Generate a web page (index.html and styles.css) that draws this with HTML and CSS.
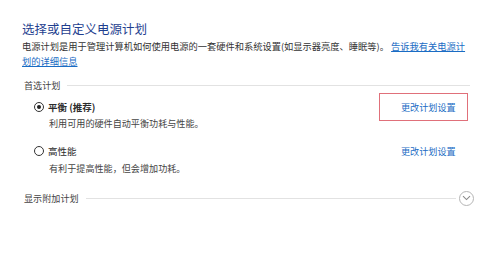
FILE: index.html
```html
<!DOCTYPE html>
<html lang="zh-CN">
<head>
    <meta charset="UTF-8">
    <meta name="viewport" content="width=device-width, initial-scale=1.0">
    <title>电源选项</title>
    <link rel="stylesheet" href="styles.css">
</head>
<body>
    <div class="page">
        <h1 class="title">选择或自定义电源计划</h1>
        <p class="intro">电源计划是用于管理计算机如何使用电源的一套硬件和系统设置(如显示器亮度、睡眠等)。 <a href="#" class="link">告诉我有关电源计</a><br><a href="#" class="link">划的详细信息</a></p>

        <!-- Preferred plans -->
        <div class="group-head">
            <span class="group-label">首选计划</span>
            <span class="rule"></span>
        </div>

        <div class="plan">
            <div class="plan-main">
                <div class="plan-name">
                    <span class="radio checked"></span>
                    <b>平衡 (推荐)</b>
                </div>
                <div class="plan-desc">利用可用的硬件自动平衡功耗与性能。</div>
            </div>
            <a href="#" class="plan-link boxed">更改计划设置</a>
        </div>

        <div class="plan second">
            <div class="plan-main">
                <div class="plan-name">
                    <span class="radio"></span>
                    <span>高性能</span>
                </div>
                <div class="plan-desc">有利于提高性能，但会增加功耗。</div>
            </div>
            <a href="#" class="plan-link">更改计划设置</a>
        </div>

        <!-- Additional plans -->
        <div class="group-head more">
            <span class="group-label">显示附加计划</span>
            <span class="rule"></span>
            <span class="expand">
                <svg width="9" height="6" viewBox="0 0 9 6"><path d="M1 1.2 L4.5 4.6 L8 1.2" fill="none" stroke="#8a8a8a" stroke-width="1.1"/></svg>
            </span>
        </div>
    </div>
</body>
</html>
```

FILE: styles.css
```css
html {
    background: #fff;
}
body {
    margin: 0;
    font-family: "Noto Sans CJK SC", "Noto Sans", sans-serif;
    color: #2b2b2b;
}
.page {
    width: 452px;
    margin-left: 22px;
    padding-top: 19px;
}
.title {
    margin: 0;
    font-size: 12.5px;
    font-weight: normal;
    line-height: 20px;
    color: #1f3f8f;
}
.intro {
    margin: 0;
    font-size: 9.25px;
    line-height: 15px;
    color: #333;
    white-space: nowrap;
}
.link {
    color: #1a6cc4;
    text-decoration: underline;
}
.group-head {
    display: flex;
    align-items: center;
    height: 14px;
    margin-top: 9px;
    padding-left: 2px;
}
.group-label {
    font-size: 9.1px;
    line-height: 14px;
    color: #444;
}
.rule {
    flex: 1;
    height: 1px;
    margin-left: 7px;
    margin-right: 4px;
    background: #e2e2e2;
}
.plan {
    display: flex;
    align-items: flex-start;
    justify-content: space-between;
    margin-top: 7px;
    padding-left: 12px;
    padding-right: 6px;
}
.plan.second {
    margin-top: 13px;
}
.plan-name {
    display: flex;
    align-items: center;
    gap: 4px;
    height: 16px;
    font-size: 9.5px;
}
.plan-name b {
    font-weight: bold;
}
.radio {
    width: 8px;
    height: 8px;
    border: 1px solid #333;
    border-radius: 50%;
    display: flex;
    align-items: center;
    justify-content: center;
}
.radio.checked::after {
    content: "";
    width: 4px;
    height: 4px;
    border-radius: 50%;
    background: #222;
}
.plan-desc {
    margin-top: 1px;
    padding-left: 15px;
    font-size: 9.1px;
    line-height: 14px;
    color: #444;
}
.second .plan-desc {
    margin-top: 2px;
}
.plan-link {
    box-sizing: border-box;
    width: 89px;
    height: 28px;
    margin-top: -6px;
    padding-left: 21px;
    border: 1px solid transparent;
    font-size: 9.1px;
    line-height: 26px;
    color: #1a6cc4;
    text-decoration: none;
}
.plan-link.boxed {
    border-color: #e0707a;
}
.group-head.more {
    margin-top: 15px;
    height: 16px;
}
.more .rule {
    margin-right: 3px;
}
.expand {
    box-sizing: border-box;
    width: 15px;
    height: 15px;
    border: 1px solid #b5b5b5;
    border-radius: 50%;
    display: flex;
    align-items: center;
    justify-content: center;
}
```
